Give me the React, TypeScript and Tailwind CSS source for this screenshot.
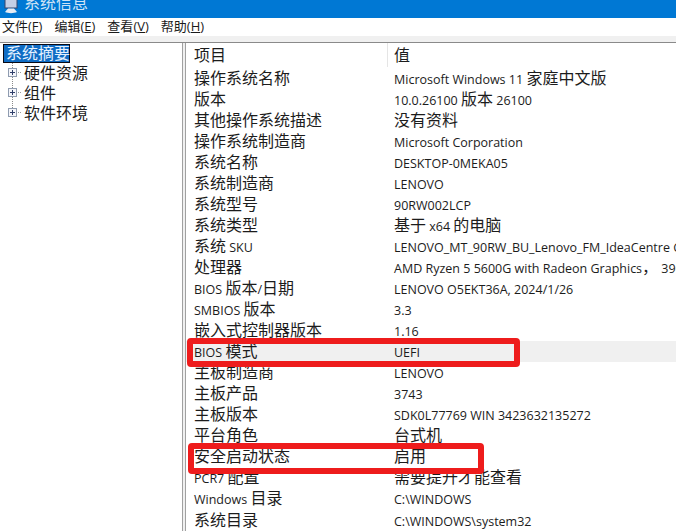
import React from "react";

const rows: [string, string][] = [
  ["操作系统名称", "Microsoft Windows 11 家庭中文版"],
  ["版本", "10.0.26100 版本 26100"],
  ["其他操作系统描述", "没有资料"],
  ["操作系统制造商", "Microsoft Corporation"],
  ["系统名称", "DESKTOP-0MEKA05"],
  ["系统制造商", "LENOVO"],
  ["系统型号", "90RW002LCP"],
  ["系统类型", "基于 x64 的电脑"],
  ["系统 SKU", "LENOVO_MT_90RW_BU_Lenovo_FM_IdeaCentre G5-14IAB7"],
  ["处理器", "AMD Ryzen 5 5600G with Radeon Graphics， 3901 Mhz"],
  ["BIOS 版本/日期", "LENOVO O5EKT36A, 2024/1/26"],
  ["SMBIOS 版本", "3.3"],
  ["嵌入式控制器版本", "1.16"],
  ["BIOS 模式", "UEFI"],
  ["主板制造商", "LENOVO"],
  ["主板产品", "3743"],
  ["主板版本", "SDK0L77769 WIN 3423632135272"],
  ["平台角色", "台式机"],
  ["安全启动状态", "启用"],
  ["PCR7 配置", "需要提升才能查看"],
  ["Windows 目录", "C:\\WINDOWS"],
  ["系统目录", "C:\\WINDOWS\\system32"],
];

function Mixed({ text }: { text: string }) {
  const parts = text.split(/([\u3000-\u9fff\uff00-\uffef]+)/).filter(Boolean);
  return (
    <>
      {parts.map((p, i) =>
        /[\u3000-\u9fff\uff00-\uffef]/.test(p) ? (
          <span key={i} className="text-[16px]">{p}</span>
        ) : (
          <span key={i} className="text-[12.5px]">{p}</span>
        )
      )}
    </>
  );
}

function Plus({ last }: { last: boolean }) {
  return (
    <svg width="19" height="20" viewBox="0 0 19 20" className="shrink-0">
      <path d={last ? "M4.5 0v5" : "M4.5 0v20"} stroke="#8a8a8a" strokeWidth="1" strokeDasharray="1 1" />
      <rect x="0.5" y="5.5" width="8" height="8" fill="#f4f5fa" stroke="#8f9cb0" />
      <path d="M2 9.5h5M4.5 7v5" stroke="#2f3f6a" strokeWidth="1" />
      <path d="M10 9.5h1M12 9.5h1" stroke="#9a9a9a" strokeWidth="1" />
    </svg>
  );
}

function Menu({ label, k }: { label: string; k: string }) {
  return (
    <span className="text-[13px] text-[#1a1a1a]">
      {label}(<span className="underline">{k}</span>)
    </span>
  );
}

export default function App() {
  return (
    <div className="w-[676px] h-[531px] overflow-hidden flex flex-col bg-white text-[#1c1c1c] relative font-['Open_Sans','Noto_Sans_CJK_SC',sans-serif]">
      <div className="h-[18px] shrink-0 bg-[#0078d4] flex items-end overflow-hidden pl-[3px]">
        <svg width="16" height="14" viewBox="0 0 16 14" className="mb-[4px] shrink-0">
          <rect x="2" y="-2" width="12" height="10" fill="#c4cfe6" stroke="#39456a" />
          <path d="M5 8.5h6l3 3.5c-3 1.5-9 1.5-12 0z" fill="#e8ecf4" />
        </svg>
        <span className="ml-[5px] text-[16px] leading-[24px] mb-[3px] text-[#cfe4f6]">系统信息</span>
      </div>
      <div className="h-[18px] shrink-0 bg-white flex items-center gap-[12px] pl-[2px]">
        <Menu label="文件" k="F" />
        <Menu label="编辑" k="E" />
        <Menu label="查看" k="V" />
        <Menu label="帮助" k="H" />
      </div>
      <div className="h-[6px] shrink-0 bg-[#f0f0f0]" />
      <div className="flex-1 flex min-h-0 border-t border-[#8a8a8a]">
        <div className="w-[183px] shrink-0 border-r border-[#a0a0a0] pt-[1px] pl-[3px]">
          <div className="w-[67px] h-[19px] bg-[#0f6cc4] border border-[#0a0a14] text-[#e4f1ff] text-[16px] leading-[17px] pl-[2px] whitespace-nowrap">系统摘要</div>
          <div className="flex flex-col pl-[5px]">
            {["硬件资源", "组件", "软件环境"].map((t, i) => (
              <div key={t} className="h-[20px] flex items-center text-[16px] text-[#1c1c1c]">
                <Plus last={i === 2} />
                <span className="-ml-[3px]">{t}</span>
              </div>
            ))}
          </div>
        </div>
        <div className="w-[2px] shrink-0 bg-[#f0f0f0]" />
        <div className="flex-1 min-w-0 border-l border-[#a0a0a0] overflow-hidden">
          <div className="h-[24px] flex items-center text-[16px]">
            <span className="w-[201px] shrink-0 pl-[8px]">项目</span>
            <span className="border-l border-[#e5e5e5] pl-[6px] h-[24px] leading-[24px]">值</span>
          </div>
          <div className="flex flex-col">
            {rows.map(([a, b]) => (
              <div
                key={a}
                className={`h-[21.05px] flex items-center whitespace-nowrap ${a === "BIOS 模式" ? "bg-[#f0f0f0]" : ""}`}
              >
                <span className="w-[201px] shrink-0 pl-[8px]"><Mixed text={a} /></span>
                <span className="pl-[7px]"><Mixed text={b} /></span>
              </div>
            ))}
          </div>
        </div>
      </div>
      <div className="absolute left-[187px] top-[338px] w-[333px] h-[29px] border-[6px] border-[#ee1c1c] rounded-[4px]" />
      <div className="absolute left-[188px] top-[443px] w-[296px] h-[31px] border-[6px] border-[#ee1c1c] rounded-[4px]" />
    </div>
  );
}
